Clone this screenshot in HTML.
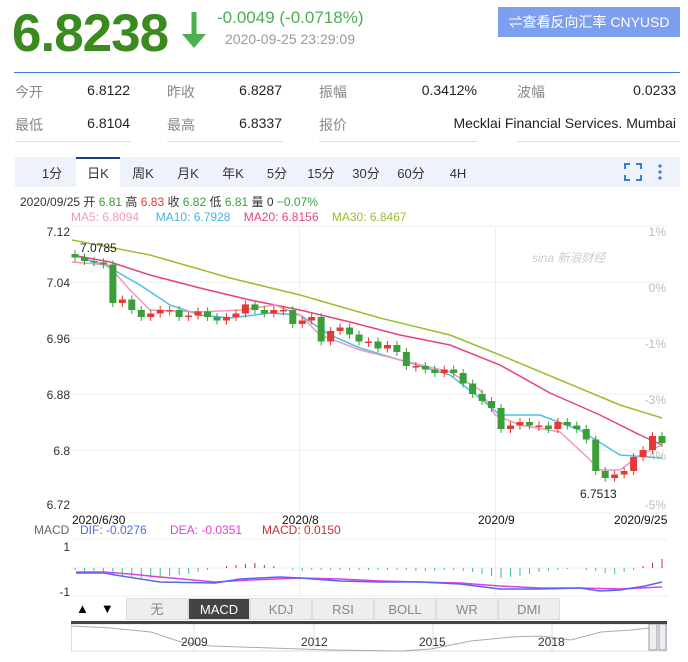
<!DOCTYPE html><html><head><meta charset="utf-8"><style>
body{margin:0;width:688px;height:662px;background:#fff;font-family:"Liberation Sans","Noto Sans CJK SC",sans-serif;position:relative;overflow:hidden}
.a{position:absolute;white-space:nowrap}
.lbl{color:#888;font-size:14px}.val{color:#222;font-size:14px;text-align:right}
.tab{position:absolute;top:160px;font-size:13px;color:#333;width:44px;text-align:center;line-height:28px}
.btn{position:absolute;top:598px;height:22px;line-height:22px;text-align:center;font-size:13px;color:#888;background:#eee;border:1px solid #ddd;box-sizing:border-box}
</style></head><body>
<div class="a" style="left:12px;top:3px;font-size:53px;font-weight:bold;color:#3b8a1f;letter-spacing:-1px">6.8238</div>
<svg class="a" style="left:180px;top:12px" width="30" height="40"><rect x="11.5" y="0" width="5" height="24" fill="#4caf50"/><polygon points="2,22 26,22 14,36" fill="#4caf50"/></svg>
<div class="a" style="left:217px;top:8px;font-size:17px;color:#4caf50">-0.0049 (-0.0718%)</div>
<div class="a" style="left:225px;top:31px;font-size:14px;color:#999">2020-09-25 23:29:09</div>
<div class="a" style="left:498px;top:7px;width:182px;height:30px;background:#7d9ff0;color:#fff;font-size:14px;line-height:30px;text-align:center">⇌查看反向汇率 CNYUSD</div>
<div class="a" style="left:14px;top:72px;width:666px;height:1px;background:#3a7bd5"></div>
<div class="a lbl" style="left:15px;top:82px">今开</div><div class="a val" style="left:60px;top:82px;width:70px">6.8122</div>
<div class="a lbl" style="left:167px;top:82px">昨收</div><div class="a val" style="left:210px;top:82px;width:72px">6.8287</div>
<div class="a lbl" style="left:319px;top:82px">振幅</div><div class="a val" style="left:400px;top:82px;width:77px">0.3412%</div>
<div class="a lbl" style="left:517px;top:82px">波幅</div><div class="a val" style="left:600px;top:82px;width:76px">0.0233</div>
<div class="a" style="left:15px;top:141px;width:116px;height:1px;background:#ddd"></div>
<div class="a" style="left:167px;top:141px;width:116px;height:1px;background:#ddd"></div>
<div class="a" style="left:319px;top:141px;width:158px;height:1px;background:#ddd"></div>
<div class="a" style="left:517px;top:141px;width:163px;height:1px;background:#ddd"></div>
<div class="a" style="left:15px;top:184px;width:116px;height:1px;background:#ddd"></div>
<div class="a" style="left:167px;top:184px;width:116px;height:1px;background:#ddd"></div>
<div class="a" style="left:319px;top:184px;width:361px;height:1px;background:#ddd"></div>
<div class="a lbl" style="left:15px;top:115px">最低</div><div class="a val" style="left:60px;top:115px;width:70px">6.8104</div>
<div class="a lbl" style="left:167px;top:115px">最高</div><div class="a val" style="left:210px;top:115px;width:72px">6.8337</div>
<div class="a lbl" style="left:319px;top:115px">报价</div><div class="a val" style="left:400px;top:115px;width:276px">Mecklai Financial Services. Mumbai</div>
<div class="a" style="left:15px;top:157px;width:665px;height:30px;background:#eef3fb"></div>
<div class="a" style="left:76px;top:157px;width:44px;height:30px;background:#fff;border-top:2px solid #1a3a8a;box-sizing:border-box"></div>
<div class="tab" style="left:30px">1分</div><div class="tab" style="left:76px">日K</div><div class="tab" style="left:121px">周K</div><div class="tab" style="left:166px">月K</div><div class="tab" style="left:211px">年K</div><div class="tab" style="left:255px">5分</div><div class="tab" style="left:299px">15分</div><div class="tab" style="left:344px">30分</div><div class="tab" style="left:389px">60分</div><div class="tab" style="left:436px">4H</div>
<svg class="a" style="left:624px;top:163px" width="40" height="18"><path d="M1 6V1H6M12 1H17V6M17 12V17H12M6 17H1V12" stroke="#3a7bd5" stroke-width="2" fill="none"/><circle cx="36" cy="3" r="1.6" fill="#3a7bd5"/><circle cx="36" cy="9" r="1.6" fill="#3a7bd5"/><circle cx="36" cy="15" r="1.6" fill="#3a7bd5"/></svg>
<div class="a" style="left:20px;top:193px;font-size:12px;color:#333">2020/09/25 开 <span style="color:#3a9f3a">6.81</span> 高 <span style="color:#e53935">6.83</span> 收 <span style="color:#3a9f3a">6.82</span> 低 <span style="color:#3a9f3a">6.81</span> 量 0 <span style="color:#3a9f3a">−0.07%</span></div>
<div class="a" style="left:71px;top:210px;font-size:12px"><span style="color:#f29ab8">MA5: 6.8094</span>&nbsp;&nbsp;&nbsp;&nbsp;&nbsp;<span style="color:#3fb6dc">MA10: 6.7928</span>&nbsp;&nbsp;&nbsp;&nbsp;<span style="color:#e8437a">MA20: 6.8156</span>&nbsp;&nbsp;&nbsp;&nbsp;<span style="color:#98bf2e">MA30: 6.8467</span></div>
<svg class="a" style="left:0;top:0" width="688" height="662" id="c">
<g stroke="#eee" stroke-width="1">
<line x1="72" y1="226" x2="667" y2="226"/><line x1="72" y1="282" x2="667" y2="282"/><line x1="72" y1="338" x2="667" y2="338"/><line x1="72" y1="394" x2="667" y2="394"/><line x1="72" y1="450" x2="667" y2="450"/><line x1="72" y1="513" x2="667" y2="513"/>
<line x1="299.5" y1="226" x2="299.5" y2="596"/><line x1="495.5" y1="226" x2="495.5" y2="596"/>
<line x1="72" y1="539" x2="667" y2="539"/><line x1="72" y1="596" x2="667" y2="596"/><line x1="72" y1="568" x2="667" y2="568"/>
</g>
<g font-size="12" fill="#333" text-anchor="end"><text x="70" y="236">7.12</text><text x="70" y="287">7.04</text><text x="70" y="343">6.96</text><text x="70" y="399">6.88</text><text x="70" y="455">6.8</text><text x="70" y="509">6.72</text></g>
<g font-size="12" fill="#bbb" text-anchor="end"><text x="666" y="236">1%</text><text x="666" y="292">0%</text><text x="666" y="348">-1%</text><text x="666" y="404">-3%</text><text x="666" y="460">-4%</text><text x="666" y="509">-5%</text></g>
<text x="532" y="262" font-size="12" fill="#ccc" font-style="italic">sina 新浪财经</text>
<g fill="none" stroke-width="1.5">
<polyline stroke="#98bf2e" points="72,240 150,255 230,278 300,295 380,318 450,335 500,355 560,380 620,405 662,418"/>
<polyline stroke="#e8437a" points="72,255 110,262 150,275 200,288 250,300 300,310 350,322 400,335 450,345 500,365 550,393 600,415 640,435 662,445"/>
<polyline stroke="#4fc0e0" points="72,255 105,265 140,285 170,305 200,315 230,318 270,313 300,315 330,335 360,348 400,360 450,375 480,398 500,415 540,415 580,430 620,455 662,458"/>
<polyline stroke="#f29ab8" points="72,262 108,265 130,290 150,310 200,312 240,310 275,305 300,315 320,335 360,350 400,360 450,372 480,390 495,415 520,425 560,432 585,455 600,470 620,470 640,455 662,445"/>
</g>
<g id="k"></g>
<text x="80" y="252" font-size="12" fill="#222">7.0785</text>
<text x="580" y="498" font-size="12" fill="#222">6.7513</text>
<g font-size="12" fill="#111"><text x="72" y="524">2020/6/30</text><text x="282" y="524">2020/8</text><text x="478" y="524">2020/9</text><text x="614" y="524">2020/9/25</text></g>
<text x="34" y="534" font-size="12" fill="#666">MACD</text>
<text x="80" y="534" font-size="12" fill="#5566ee">DIF: -0.0276</text>
<text x="170" y="534" font-size="12" fill="#e040e0">DEA: -0.0351</text>
<text x="262" y="534" font-size="12" fill="#c03030">MACD: 0.0150</text>
<text x="70" y="551" font-size="12" fill="#333" text-anchor="end">1</text>
<text x="70" y="596" font-size="12" fill="#333" text-anchor="end">-1</text>
<g id="h"></g>
<polyline fill="none" stroke="#e040e0" stroke-width="1.5" points="76,572 104,572 130,574 160,577 215,582 250,580 300,578 340,579 380,581 420,582 460,583 500,586 540,588 580,588 620,589 662,587"/>
<polyline fill="none" stroke="#5566ee" stroke-width="1.5" points="76,573 104,573 115,575 160,582 215,583 240,579 280,577 300,578 340,581 380,582 420,582 460,584 500,589 540,589 580,588 600,591 620,590 645,586 662,582"/>
</svg>
<div class="a" style="left:72px;top:598px;width:44px;height:22px;font-size:13px;line-height:22px"><span style="margin-left:4px">▲</span><span style="margin-left:12px">▼</span></div>
<div class="btn" style="left:126px;width:62px">无</div><div class="btn" style="left:188px;width:62px;background:#444;color:#fff">MACD</div><div class="btn" style="left:250px;width:62px">KDJ</div><div class="btn" style="left:312px;width:62px">RSI</div><div class="btn" style="left:374px;width:62px">BOLL</div><div class="btn" style="left:436px;width:62px">WR</div><div class="btn" style="left:498px;width:62px">DMI</div>
<div class="a" style="left:71px;top:621px;width:596px;height:3px;background:#444"></div>
<svg class="a" style="left:71px;top:624px" width="596" height="28"><rect x="0.5" y="0" width="595" height="27" fill="none" stroke="#ddd"/>
<g stroke="#ddd"><line x1="123" y1="0" x2="123" y2="27"/><line x1="243" y1="0" x2="243" y2="27"/><line x1="362" y1="0" x2="362" y2="27"/><line x1="481" y1="0" x2="481" y2="27"/></g>
<polyline fill="none" stroke="#aaa" points="0,2 40,4 80,8 110,18 140,22 200,24 260,26 330,27 360,25 400,17 440,13 470,12 500,16 530,8 560,6 578,4"/>
<g font-size="12" fill="#333"><text x="110" y="22">2009</text><text x="230" y="22">2012</text><text x="348" y="22">2015</text><text x="467" y="22">2018</text></g>
<rect x="578" y="0" width="8" height="26" fill="#eee" stroke="#99a"/><rect x="588" y="0" width="7" height="26" fill="#eee" stroke="#99a"/></svg>
<script>
var c=[7.075,7.07,7.068,7.065,7.01,7.015,7.0,6.99,6.995,7.0,7.0,6.99,6.992,6.998,6.99,6.985,6.99,6.995,7.008,7.0,6.995,7.0,7.0,6.98,6.985,6.99,6.955,6.97,6.975,6.965,6.955,6.955,6.945,6.95,6.94,6.92,6.92,6.915,6.91,6.915,6.91,6.895,6.88,6.87,6.86,6.83,6.835,6.84,6.835,6.835,6.83,6.84,6.835,6.83,6.815,6.77,6.76,6.765,6.77,6.79,6.8,6.82,6.81];
var hv=[-2,-3,-3,-4,-6,-8,-9,-10,-10,-9,-8,-7,-6,-4,-2,0,2,3,4,5,3,2,0,-2,-3,-2,-2,-2,-2,-2,-2,-2,-2,-2,-2,-2,-3,-3,-3,-2,-2,-3,-4,-6,-8,-10,-9,-8,-6,-4,-3,-2,-1,0,-2,-3,-5,-6,-4,-2,2,5,9];
function Y(p){return 226+(7.12-p)/0.08*56}
var s='',h='',n=c.length,prev=7.08;
for(var i=0;i<n;i++){var x=75+i*(587/(n-1)),o=prev,cl=c[i];var up=cl>=o;var col=up?'#e53935':'#3a9f3a';
var t=Y(Math.max(o,cl)),b=Y(Math.min(o,cl));if(b-t<1.5)b=t+1.5;
s+='<line x1="'+x+'" x2="'+x+'" y1="'+(t-4)+'" y2="'+(b+4)+'" stroke="'+col+'"/><rect x="'+(x-3.5)+'" y="'+t+'" width="7" height="'+(b-t)+'" fill="'+col+'"/>';
var hh=hv[i]||0;
h+='<line x1="'+x+'" x2="'+x+'" y1="568" y2="'+(568-hh)+'" stroke="'+(hh>0?'#c03030':'#3fbf8f')+'"/>';
prev=cl;}
document.getElementById('k').innerHTML=s;document.getElementById('h').innerHTML=h;
</script>
</body></html>
